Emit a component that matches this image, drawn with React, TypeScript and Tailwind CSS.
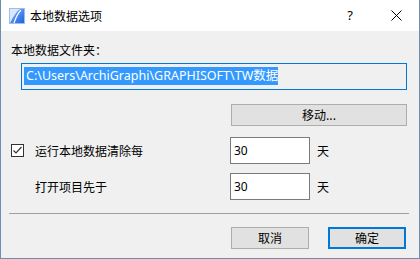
import React from 'react';

const font = { fontFamily: '"Noto Sans CJK SC", "Noto Sans", sans-serif' };
const latin = { fontFamily: '"Noto Sans", "Noto Sans CJK SC", sans-serif' };

const AppIcon: React.FC = () => (
  <svg width="16" height="16" viewBox="0 0 16 16">
    <defs>
      <linearGradient id="g" x1="0" y1="0" x2="1" y2="1">
        <stop offset="0" stopColor="#7fb3ff" />
        <stop offset="1" stopColor="#1f63e6" />
      </linearGradient>
    </defs>
    <rect x="0.5" y="0.5" width="15" height="15" fill="#dbe8fb" stroke="#9fbfe8" />
    <path d="M1 15 C4 9 7 4 11 1 L15 1 L15 15 Z" fill="url(#g)" />
    <path d="M5 15 C7 9 9 5 12 2" stroke="#ffffff" strokeWidth="1.2" fill="none" />
  </svg>
);

const Button: React.FC<{ label: string; primary?: boolean; className?: string }> = ({ label, primary, className }) => (
  <div
    className={`flex items-center justify-center bg-[#e1e1e1] text-[12px] text-black ${
      primary ? 'border-2 border-[#0078d7]' : 'border border-[#adadad]'
    } ${className ?? ''}`}
  >
    {label}
  </div>
);

const NumberBox: React.FC<{ value: string }> = ({ value }) => (
  <div className="flex items-center w-[80px] h-[27px] bg-white border border-[#7a7a7a] pl-[3px] text-[12px]" style={latin}>
    {value}
  </div>
);

export default function App() {
  return (
    <div
      className="w-[420px] h-[259px] bg-[#f0f0f0] border-x border-b border-[#6e8db3] flex flex-col text-black"
      style={font}
    >
      {/* Title bar */}
      <div className="h-[31px] bg-white flex items-center shrink-0">
        <div className="ml-[8px]">
          <AppIcon />
        </div>
        <span className="ml-[5px] text-[12px]">本地数据选项</span>
        <span className="ml-auto mr-[38px] text-[13px]" style={latin}>?</span>
        <svg width="11" height="11" viewBox="0 0 11 11" className="mr-[17px]">
          <path d="M0.5 0.5 L10.5 10.5 M10.5 0.5 L0.5 10.5" stroke="#000" strokeWidth="1" />
        </svg>
      </div>

      {/* Content */}
      <div className="flex flex-col text-[12px] leading-[16px]">
        <div className="mt-[11px] ml-[10px]">本地数据文件夹：</div>

        <div className="mt-[5px] ml-[20px] w-[386px] h-[27px] border border-[#0078d7] flex items-center pl-[2px]">
          <span className="bg-[#3399ff] text-white text-[12.5px] leading-[18px] pl-[2px] -mt-[2px]" style={latin}>
            C:\Users\ArchiGraphi\GRAPHISOFT\TW数据
          </span>
        </div>

        <Button label="移动..." className="mt-[14px] ml-[230px] w-[176px] h-[22px]" />

        <div className="mt-[11px] flex items-center">
          <div className="w-[229px] flex items-center">
            <div className="ml-[10px] w-[13px] h-[13px] border border-[#333] bg-white flex items-center justify-center">
              <svg width="11" height="11" viewBox="0 0 11 11">
                <path d="M1.5 5.5 L4 8 L9.5 2" stroke="#333" strokeWidth="1.2" fill="none" />
              </svg>
            </div>
            <span className="ml-[11px]">运行本地数据清除每</span>
          </div>
          <NumberBox value="30" />
          <span className="ml-[7px]">天</span>
        </div>

        <div className="mt-[9px] flex items-center">
          <div className="w-[229px] flex items-center">
            <span className="ml-[34px]">打开项目先于</span>
          </div>
          <NumberBox value="30" />
          <span className="ml-[7px]">天</span>
        </div>

        <div className="mt-[13px] ml-[8px] w-[400px] h-px bg-[#a0a0a0]" />

        <div className="mt-[13px] flex">
          <Button label="取消" className="ml-[230px] w-[78px] h-[22px]" />
          <Button label="确定" primary className="ml-[19px] w-[78px] h-[22px]" />
        </div>
      </div>
    </div>
  );
}
